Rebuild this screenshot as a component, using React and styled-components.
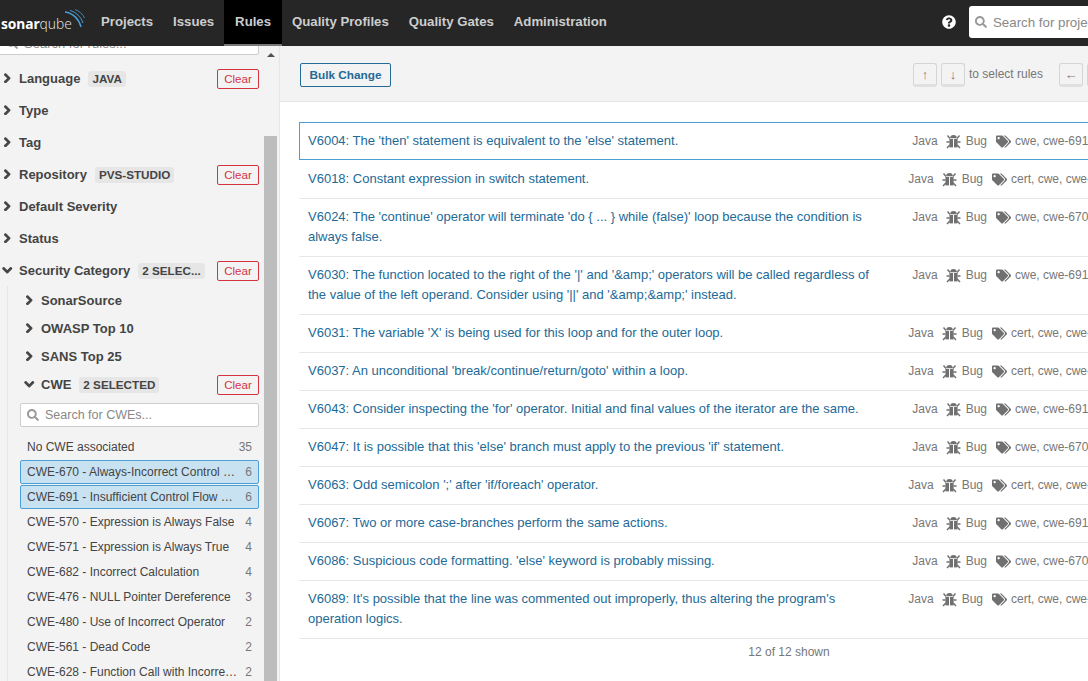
import React from 'react';
import styled, { createGlobalStyle } from 'styled-components';
import { FaChevronRight, FaChevronDown, FaSearch, FaQuestionCircle, FaTags } from 'react-icons/fa';

const GlobalStyle = createGlobalStyle`
    html, body {
        margin: 0;
        padding: 0;
        height: 100%;
        overflow: hidden;
        font-family: "Liberation Sans", Arial, sans-serif;
        font-size: 12px;
        color: #444;
    }
`;

const Page = styled.div`
    width: 1088px;
    height: 681px;
    display: flex;
    flex-direction: column;
    overflow: hidden;
    background: #fff;
`;

const TopNav = styled.nav`
    flex: none;
    height: 46px;
    background: #262626;
    display: flex;
    align-items: stretch;
    position: relative;
`;

const Logo = styled.div`
    width: 91px;
    padding: 0 0 0 1px;
    box-sizing: border-box;
    display: flex;
    align-items: center;
    position: relative;
    color: #fff;
    font-family: "Noto Sans", sans-serif;
    font-size: 13.8px;

    & b { font-weight: 700; letter-spacing: -0.1px; }
    & span { font-weight: 300; color: #ddd; }
    & svg { position: absolute; left: 64px; top: 9px; }
`;

const NavItem = styled.a`
    padding: 0 ${p => (p.$active ? '11px' : '10px')} 3px;
    display: flex;
    align-items: center;
    font-size: 13.2px;
    font-weight: bold;
    color: ${p => (p.$active ? '#c9cdd1' : '#cdcdcd')};
    background: ${p => (p.$active ? '#000' : 'transparent')};
    box-shadow: ${p => (p.$active ? 'inset 0 -2px 0 #777' : 'none')};
`;

const NavRight = styled.div`
    margin-left: auto;
    padding-bottom: 2px;
    display: flex;
    align-items: center;
    gap: 13px;
    color: #fff;
    font-size: 14px;
`;

const HelpIcon = styled(FaQuestionCircle)`
    display: block;
`;

const SearchGlyph = styled(FaSearch)`
    flex: none;
    color: #999;
    font-size: 12px;
`;

const TopSearch = styled.div`
    width: 119px;
    height: 32px;
    box-sizing: border-box;
    background: #fff;
    border-radius: 3px 0 0 3px;
    display: flex;
    align-items: center;
    gap: 6px;
    padding-left: 6px;
    color: #888;
    font-size: 13.3px;
    white-space: nowrap;
    overflow: hidden;
`;

const Body = styled.div`
    flex: 1;
    display: flex;
    min-height: 0;
`;

const Sidebar = styled.aside`
    flex: none;
    width: 279px;
    border-right: 1px solid #e6e6e6;
    background: #f3f3f3;
    overflow: hidden;
    position: relative;
`;

const SideInner = styled.div`
    width: 259px;
`;

const RulesSearch = styled.div`
    height: 24px;
    margin: -15px 0 7px -2px;
    background: #fff;
    border: 1px solid #cdcdcd;
    border-radius: 2px;
    box-sizing: border-box;
    display: flex;
    align-items: center;
    gap: 6px;
    padding-left: 7px;
    color: #888;
    font-size: 13px;
`;

const ScrollTrack = styled.div`
    position: absolute;
    top: 0;
    bottom: 0;
    left: 264px;
    width: 13px;
`;

const ScrollArrow = styled.div`
    position: absolute;
    top: 7px;
    left: 3px;
    width: 0;
    height: 0;
    border-left: 4px solid transparent;
    border-right: 4px solid transparent;
    border-bottom: 4px solid #505050;
`;

const ScrollThumb = styled.div`
    position: absolute;
    top: 90px;
    bottom: 0;
    left: 0;
    right: 0;
    background: #bdbdbd;
`;

const FacetRow = styled.div`
    height: ${p => (p.$sub ? '28px' : '32px')};
    display: flex;
    align-items: center;
    padding-left: ${p => (p.$sub ? '25px' : '3px')};
`;

const Chevron = styled.span`
    flex: none;
    width: 17px;
    margin-left: -1px;
    display: flex;
    align-items: center;
    color: #444;
    font-size: 10.5px;

    & svg {
        stroke: #444;
        stroke-width: 50px;
    }
`;

const FacetTitle = styled.span`
    font-size: 13px;
    font-weight: bold;
    color: #444;
    white-space: nowrap;
`;

const Badge = styled.span`
    margin: 2px 0 0 8px;
    padding: 0 4px;
    height: 16px;
    line-height: 16px;
    background: #e6e6e6;
    border-radius: 3px;
    font-size: 11.7px;
    font-weight: bold;
    color: #444;
    white-space: nowrap;
`;

const ClearButton = styled.button`
    margin: 2px 0 0 auto;
    flex: none;
    width: 42px;
    height: 20px;
    box-sizing: border-box;
    padding: 0;
    background: transparent;
    border: 1px solid #d4333f;
    border-radius: 2px;
    color: #d4333f;
    font-family: inherit;
    font-size: 11.5px;
`;

const SubFacets = styled.div`
    margin-left: 7px;
    border-left: 1px solid #e6e6e6;
`;

const SubList = styled.div`
    margin-left: -8px;
`;

const CweSearch = styled.div`
    margin: 5px 0 8px 20px;
    height: 24px;
    box-sizing: border-box;
    background: #fff;
    border: 1px solid #cdcdcd;
    border-radius: 2px;
    display: flex;
    align-items: center;
    gap: 6px;
    padding-left: 6px;
    color: #888;
    font-size: 12.5px;
`;

const FacetItem = styled.div`
    margin: 0 0 1px 20px;
    height: 24px;
    box-sizing: border-box;
    padding: 0 6px;
    display: flex;
    align-items: center;
    justify-content: space-between;
    gap: 8px;
    border: 1px solid ${p => (p.$selected ? '#4b9fd5' : 'transparent')};
    border-radius: 2px;
    background: ${p => (p.$selected ? '#c9e2f2' : 'transparent')};
    font-size: 12px;
    color: #444;
`;

const ItemName = styled.span`
    overflow: hidden;
    white-space: nowrap;
    text-overflow: ellipsis;
`;

const ItemCount = styled.span`
    flex: none;
    color: #777;
`;

const Main = styled.main`
    flex: 1;
    min-width: 0;
    overflow: hidden;
`;

const MainHeader = styled.header`
    height: 56px;
    box-sizing: border-box;
    background: #f3f3f3;
    border-bottom: 1px solid #e6e6e6;
    width: 831px;
    padding: 17px 0 0 20px;
    display: flex;
    align-items: flex-start;
`;

const BulkButton = styled.button`
    width: 91px;
    height: 24px;
    box-sizing: border-box;
    padding: 0;
    background: transparent;
    border: 1px solid #236a97;
    border-radius: 2px;
    color: #236a97;
    font-family: inherit;
    font-size: 11.8px;
    font-weight: bold;
`;

const Hints = styled.div`
    margin-left: auto;
    display: flex;
    align-items: flex-start;
    gap: 4px;
    color: #777;
    font-size: 12px;
`;

const Key = styled.span`
    width: 24px;
    height: 24px;
    box-sizing: border-box;
    background: #f3f3f3;
    border: 1px solid #d5d5d5;
    border-bottom: 3px solid #e0e0e0;
    border-radius: 3px;
    display: flex;
    align-items: center;
    justify-content: center;
    color: #777;
    font-size: 13px;
`;

const KeyLabel = styled.span`
    margin: 4px 12px 0 0;
`;

const RuleList = styled.div`
    width: 980px;
    margin: 21px 0 0 19px;
`;

const Row = styled.div`
    display: flex;
    align-items: flex-start;
    box-sizing: border-box;
    padding: ${p => (p.$selected ? '8px 168px 8px 8px' : '7px 168px 9px 8px')};
    margin: ${p => (p.$selected ? '-1px 0 1px' : '0')};
    border: 1px solid ${p => (p.$selected ? '#4b9fd5' : 'transparent')};
    border-bottom-color: ${p => (p.$selected ? '#4b9fd5' : '#e6e6e6')};
    line-height: 20px;
`;

const RuleTitle = styled.a`
    flex: none;
    width: 572px;
    font-size: 13px;
    color: #236a97;
`;

const Meta = styled.div`
    margin-left: auto;
    display: flex;
    align-items: center;
    color: #777;
    font-size: 12px;
    white-space: nowrap;
`;

const BugIcon = styled.svg`
    margin: 0 5px 0 8px;
    display: block;
`;

const TagsIcon = styled(FaTags)`
    margin: 0 4px 0 9px;
    font-size: 15px;
    color: #707070;
`;

const TagText = styled.span`
    width: ${p => (p.$wide ? '99px' : '95px')};
    overflow: hidden;
`;

const Shown = styled.div`
    margin-top: 3px;
    height: 20px;
    line-height: 20px;
    text-align: center;
    color: #777;
    font-size: 12px;
`;

const facets = [
    { name: 'Language', badge: 'JAVA', clear: true },
    { name: 'Type' },
    { name: 'Tag' },
    { name: 'Repository', badge: 'PVS-STUDIO', clear: true },
    { name: 'Default Severity' },
    { name: 'Status' },
];

const cweItems = [
    ['No CWE associated', 35],
    ['CWE-670 - Always-Incorrect Control Flow Implementation', 6, true],
    ['CWE-691 - Insufficient Control Flow Management', 6, true],
    ['CWE-570 - Expression is Always False', 4],
    ['CWE-571 - Expression is Always True', 4],
    ['CWE-682 - Incorrect Calculation', 4],
    ['CWE-476 - NULL Pointer Dereference', 3],
    ['CWE-480 - Use of Incorrect Operator', 2],
    ['CWE-561 - Dead Code', 2],
    ['CWE-628 - Function Call with Incorrectly Specified Arguments', 2],
];

const rules = [
    ['V6004: The \'then\' statement is equivalent to the \'else\' statement.', 'cwe, cwe-691'],
    ['V6018: Constant expression in switch statement.', 'cert, cwe, cwe-570'],
    ['V6024: The \'continue\' operator will terminate \'do { ... } while (false)\' loop because the condition is always false.', 'cwe, cwe-670'],
    ['V6030: The function located to the right of the \'|\' and \'&amp;\' operators will be called regardless of the value of the left operand. Consider using \'||\' and \'&amp;&amp;\' instead.', 'cwe, cwe-691'],
    ['V6031: The variable \'X\' is being used for this loop and for the outer loop.', 'cert, cwe, cwe-691'],
    ['V6037: An unconditional \'break/continue/return/goto\' within a loop.', 'cert, cwe, cwe-670'],
    ['V6043: Consider inspecting the \'for\' operator. Initial and final values of the iterator are the same.', 'cwe, cwe-691'],
    ['V6047: It is possible that this \'else\' branch must apply to the previous \'if\' statement.', 'cwe, cwe-670'],
    ['V6063: Odd semicolon \';\' after \'if/foreach\' operator.', 'cert, cwe, cwe-670'],
    ['V6067: Two or more case-branches perform the same actions.', 'cwe, cwe-691'],
    ['V6086: Suspicious code formatting. \'else\' keyword is probably missing.', 'cwe, cwe-670'],
    ['V6089: It\'s possible that the line was commented out improperly, thus altering the program\'s operation logics.', 'cert, cwe, cwe-691'],
];

const Bug = () => (
    <BugIcon width="15" height="15" viewBox="0 0 15 15" fill="#707070">
        <path d="M4.2 4.2a3.3 3.3 0 0 1 6.6 0z" />
        <rect x="3.4" y="5" width="3.6" height="8.4" />
        <rect x="8" y="5" width="3.6" height="8.4" />
        <path d="M1.5 1.5l2.5 3M13.5 1.5l-2.5 3M0.5 8h3M14.5 8h-3M1 14l2.8-3M14 14l-2.8-3" stroke="#707070" strokeWidth="1.4" fill="none" />
    </BugIcon>
);

const App = () => (
    <Page>
        <GlobalStyle />
        <TopNav>
            <Logo>
                <b>sonar</b><span>qube</span>
                <svg width="22" height="20" viewBox="0 0 22 20" fill="none" stroke="#4b9fd5">
                    <path d="M1 3C9 4 15 10 17 18" strokeWidth="1.4" />
                    <path d="M6 1.5C12 3 17 8 19 14" strokeWidth="1" />
                    <path d="M11 0.5C15 2 19 5 20.5 9" strokeWidth="0.8" />
                </svg>
            </Logo>
            <NavItem>Projects</NavItem>
            <NavItem>Issues</NavItem>
            <NavItem $active>Rules</NavItem>
            <NavItem>Quality Profiles</NavItem>
            <NavItem>Quality Gates</NavItem>
            <NavItem>Administration</NavItem>
            <NavRight>
                <HelpIcon />
                <TopSearch><SearchGlyph />Search for projects...</TopSearch>
            </NavRight>
        </TopNav>
        <Body>
            <Sidebar>
                <SideInner>
                    <RulesSearch><SearchGlyph />Search for rules...</RulesSearch>
                    {facets.map(f => (
                        <FacetRow key={f.name}>
                            <Chevron><FaChevronRight /></Chevron>
                            <FacetTitle>{f.name}</FacetTitle>
                            {f.badge && <Badge>{f.badge}</Badge>}
                            {f.clear && <ClearButton>Clear</ClearButton>}
                        </FacetRow>
                    ))}
                    <FacetRow>
                        <Chevron><FaChevronDown /></Chevron>
                        <FacetTitle>Security Category</FacetTitle>
                        <Badge>2 SELEC...</Badge>
                        <ClearButton>Clear</ClearButton>
                    </FacetRow>
                    <SubFacets>
                        <SubList>
                            {['SonarSource', 'OWASP Top 10', 'SANS Top 25'].map(s => (
                                <FacetRow $sub key={s}>
                                    <Chevron><FaChevronRight /></Chevron>
                                    <FacetTitle>{s}</FacetTitle>
                                </FacetRow>
                            ))}
                            <FacetRow $sub>
                                <Chevron><FaChevronDown /></Chevron>
                                <FacetTitle>CWE</FacetTitle>
                                <Badge>2 SELECTED</Badge>
                                <ClearButton>Clear</ClearButton>
                            </FacetRow>
                            <CweSearch><SearchGlyph />Search for CWEs...</CweSearch>
                            {cweItems.map(([name, count, selected]) => (
                                <FacetItem key={name} $selected={selected}>
                                    <ItemName>{name}</ItemName>
                                    <ItemCount>{count}</ItemCount>
                                </FacetItem>
                            ))}
                        </SubList>
                    </SubFacets>
                </SideInner>
                <ScrollTrack>
                    <ScrollArrow />
                    <ScrollThumb />
                </ScrollTrack>
            </Sidebar>
            <Main>
                <MainHeader>
                    <BulkButton>Bulk Change</BulkButton>
                    <Hints>
                        <Key>↑</Key>
                        <Key>↓</Key>
                        <KeyLabel>to select rules</KeyLabel>
                        <Key>←</Key>
                        <Key>→</Key>
                    </Hints>
                </MainHeader>
                <RuleList>
                    {rules.map(([title, tags], i) => (
                        <Row key={title} $selected={i === 0}>
                            <RuleTitle>{title}</RuleTitle>
                            <Meta>
                                Java
                                <Bug />
                                Bug
                                <TagsIcon />
                                <TagText $wide={tags.startsWith('cert')}>{tags}</TagText>
                            </Meta>
                        </Row>
                    ))}
                    <Shown>12 of 12 shown</Shown>
                </RuleList>
            </Main>
        </Body>
    </Page>
);

export default App;
